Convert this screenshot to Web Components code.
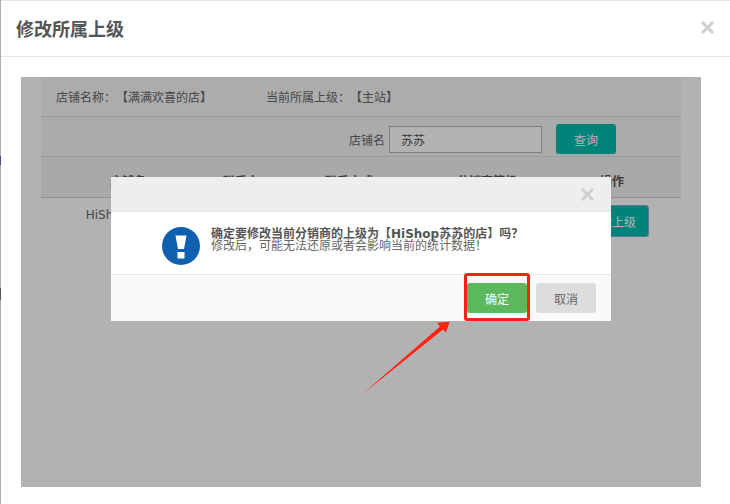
<!DOCTYPE html>
<html lang="zh-CN">
<head>
<meta charset="utf-8">
<title>修改所属上级</title>
<style>
  html, body { margin: 0; height: 100%; background: #fff; overflow: hidden; }
  body { font-family: "DejaVu Sans", "Noto Sans CJK SC", sans-serif; font-size: 12px; color: #666; text-spacing-trim: space-all; }
</style>
</head>
<body>
<template id="x-icon"><svg width="13" height="13" viewBox="0 0 13 13"><path d="M1 1L12 12M12 1L1 12" stroke="#cfcfcf" stroke-width="3" fill="none"/></svg></template>

<shop-window>
  <span slot="title">修改所属上级</span>
  <store-panel>
    <info-row>
      <span style="width:210px">店铺名称：【满满欢喜的店】</span>
      <span>当前所属上级：【主站】</span>
    </info-row>
    <search-row label="店铺名" value="苏苏"></search-row>
    <table-row head>
      <span>店铺名</span><span>联系人</span><span>联系方式</span><span>分销商等级</span><span>操作</span>
    </table-row>
    <table-row>
      <span class="name">HiShop苏苏的店</span><span></span><span></span><span></span>
      <action-button tone="teal" outlined>修改上级</action-button>
    </table-row>
    <confirm-dialog slot="over">
      <span slot="main">确定要修改当前分销商的上级为【HiShop苏苏的店】吗？</span>
      <span slot="sub">修改后，可能无法还原或者会影响当前的统计数据！</span>
    </confirm-dialog>
  </store-panel>
</shop-window>

<script>
// top level window: side strip, title bar, content
class ShopWindow extends HTMLElement {
  constructor() {
    super();
    this.shadow = this.attachShadow({ mode: 'open' });
    this.shadow.innerHTML = `
      <style>
        :host { display: flex; height: 504px; }
        .strip { width: 1px; flex: none; background: linear-gradient(#b0b0b0 0 156px, #4a4a80 156px 165px, #b0b0b0 165px 288px, #555 288px 300px, #b0b0b0 300px); }
        .main { flex: 1; display: flex; flex-direction: column; border-top: 1px solid #e5e5e5; min-width: 0; }
        header { height: 56px; flex: none; box-sizing: border-box; border-bottom: 1px solid #e5e5e5; display: flex; align-items: center; justify-content: space-between; padding: 0 16px 2px 15px; }
        h1 { margin: 0; font: bold 18px "Noto Sans CJK SC", sans-serif; color: #555; }
        svg { display: block; margin-bottom: 1px; }
        .body { padding: 20px 29px 17px 20px; flex: 1; display: flex; min-height: 0; }
      </style>
      <div class="strip"></div>
      <div class="main">
        <header><h1><slot name="title"></slot></h1></header>
        <div class="body"><slot></slot></div>
      </div>`;
    this.shadow.querySelector('header').appendChild(document.getElementById('x-icon').content.cloneNode(true));
  }
}
customElements.define('shop-window', ShopWindow);

// the dimmed page behind the dialog
class StorePanel extends HTMLElement {
  constructor() {
    super();
    this.shadow = this.attachShadow({ mode: 'open' });
    this.shadow.innerHTML = `
      <style>
        :host { display: block; flex: 1; position: relative; background: #fff; padding: 0 20px; }
        .dim { position: absolute; inset: 0; background: rgba(0,0,0,.3); }
        .over { position: absolute; left: 90px; top: 100px; }
        svg { position: absolute; left: 340px; top: 243px; }
      </style>
      <slot></slot>
      <div class="dim"></div>
      <div class="over"><slot name="over"></slot></div>
      <svg width="90" height="76" viewBox="0 0 90 76"><polygon points="1,74.5 79,6.5 76,2.7 88.5,1.7 85,12.5 82,9.5" fill="#ff2113"/></svg>`;
  }
}
customElements.define('store-panel', StorePanel);

class InfoRow extends HTMLElement {
  constructor() {
    super();
    this.shadow = this.attachShadow({ mode: 'open' });
    this.shadow.innerHTML = `
      <style>
        :host { display: flex; align-items: center; height: 39px; background: #f7f7f7; border-bottom: 1px solid #ddd; padding: 0 15px; font-family: "Noto Sans CJK TC", sans-serif; }
      </style>
      <slot></slot>`;
  }
}
customElements.define('info-row', InfoRow);

class SearchRow extends HTMLElement {
  constructor() {
    super();
    this.shadow = this.attachShadow({ mode: 'open' });
    this.shadow.innerHTML = `
      <style>
        :host { display: flex; align-items: center; justify-content: flex-end; height: 34px; padding-top: 5px; background: #f5f5f5; border-bottom: 1px solid #ddd; padding-right: 65px; font-family: "Noto Sans CJK SC", sans-serif; }
        .field { width: 153px; height: 27px; box-sizing: border-box; border: 1px solid #b5b5b5; margin: 0 14px 0 4px; padding-left: 11px; line-height: 25px; background: #fff; color: #555; }
      </style>
      <span>${this.getAttribute('label')}</span>
      <div class="field">${this.getAttribute('value')}</div>
      <action-button tone="teal">查询</action-button>`;
  }
}
customElements.define('search-row', SearchRow);

class TableRow extends HTMLElement {
  constructor() {
    super();
    this.shadow = this.attachShadow({ mode: 'open' });
    this.shadow.innerHTML = `
      <style>
        :host { display: grid; grid-template-columns: 174px 52px 164px 112px 138px; }
        :host([head]) { height: 34px; padding-top: 6px; background: #f2f2f2; border-bottom: 1px solid #ccc; font-weight: bold; color: #555; align-items: center; }
        :host(:not([head])) { padding-top: 7px; }
        ::slotted(*) { text-align: center; white-space: nowrap; justify-self: center; font-family: "DejaVu Sans", "Noto Sans CJK SC", sans-serif; }
        ::slotted(.name) { margin: 0 0 0 6px; }
      </style>
      <slot></slot>`;
  }
}
customElements.define('table-row', TableRow);

class ActionButton extends HTMLElement {
  constructor() {
    super();
    this.shadow = this.attachShadow({ mode: 'open' });
    const tones = { teal: ['#00beae', '#fff'], green: ['#5cb85c', '#fff'], grey: ['#ddd', '#666'] };
    const [bg, fg] = tones[this.getAttribute('tone')] || tones.grey;
    this.shadow.innerHTML = `
      <style>
        :host { display: inline-flex; align-items: center; justify-content: center; box-sizing: border-box; height: 30px; min-width: 60px; padding: 0 12px; border-radius: 3px; background: ${bg}; color: ${fg}; font: 12px "Noto Sans CJK SC", sans-serif; }
        :host([outlined]) { border: 1px solid #7faee0; height: 32px; }
      </style>
      <slot></slot>`;
  }
}
customElements.define('action-button', ActionButton);

class ConfirmDialog extends HTMLElement {
  constructor() {
    super();
    this.shadow = this.attachShadow({ mode: 'open' });
    this.shadow.innerHTML = `
      <style>
        :host { display: block; width: 500px; background: #fff; position: relative; font-family: "DejaVu Sans", "Noto Sans CJK TC", sans-serif; }
        .head { height: 34px; background: #eee; border-bottom: 1px solid #e5e5e5; display: flex; align-items: center; justify-content: flex-end; padding-right: 17px; }
        .body { height: 62px; display: flex; padding: 15px 0 0 51px; box-sizing: border-box; gap: 11px; }
        .main { font-weight: bold; color: #555; line-height: 12px; }
        .sub { color: #666; line-height: 12px; }
        ::slotted(span) { display: block; white-space: nowrap; }
        .text { margin-top: 1px; }
        .foot { height: 47px; background: #fafafa; border-top: 1px solid #e5e5e5; display: flex; justify-content: flex-end; align-items: flex-start; gap: 9px; padding: 8px 15px 0 0; box-sizing: border-box; }
        .mark { position: absolute; left: 353px; top: 96px; width: 60px; height: 42px; border: 3px solid #ff2113; border-radius: 3px; }
      </style>
      <div class="head"></div>
      <div class="body">
        <svg width="38" height="38" viewBox="0 0 38 38" style="flex:none">
          <circle cx="19" cy="19" r="19" fill="#1060b0"/>
          <path d="M13.5 8.5H24.5L22 22H16Z" fill="#fff"/>
          <rect x="15.5" y="25" width="7" height="6.5" fill="#fff"/>
        </svg>
        <div class="text">
          <div class="main"><slot name="main"></slot></div>
          <div class="sub"><slot name="sub"></slot></div>
        </div>
      </div>
      <div class="foot">
        <action-button tone="green">确定</action-button>
        <action-button tone="grey">取消</action-button>
      </div>
      <div class="mark"></div>`;
    this.shadow.querySelector('.head').appendChild(document.getElementById('x-icon').content.cloneNode(true));
  }
}
customElements.define('confirm-dialog', ConfirmDialog);
</script>
</body>
</html>
